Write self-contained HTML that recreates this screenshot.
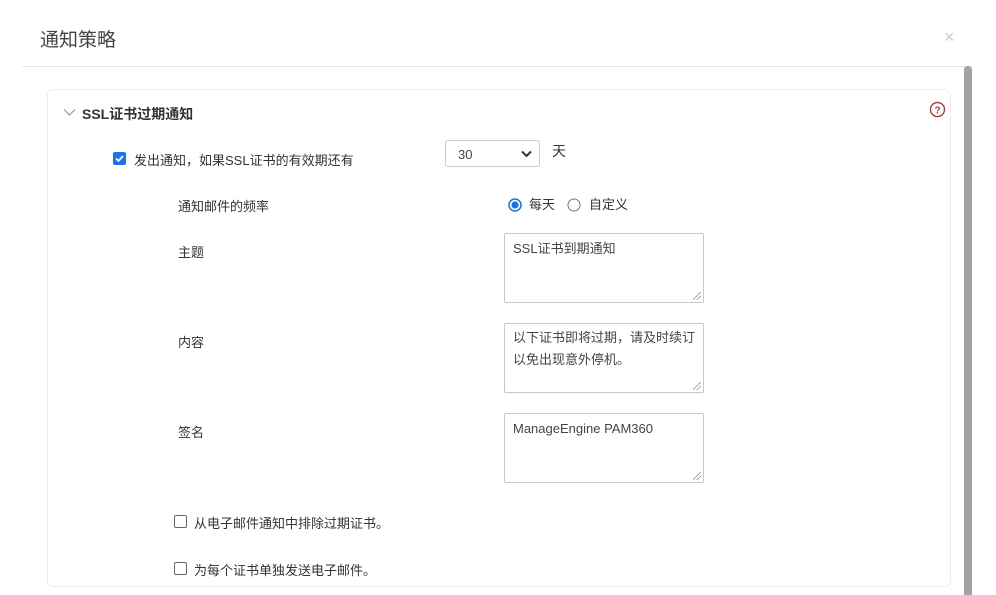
<!DOCTYPE html>
<html><head><meta charset="utf-8"><style>
*{margin:0;padding:0;box-sizing:border-box}
body{width:996px;height:595px;background:#fff;position:relative;overflow:hidden;font-family:"Liberation Sans","Noto Sans CJK SC",sans-serif;color:#333;font-size:13px}
.a{position:absolute;white-space:nowrap}
.ta{position:absolute;border:1px solid #c8c8c8;border-radius:2px;background:#fff;width:200px;height:70px;padding:4px 8px;font-size:13px;line-height:22px;color:#444;white-space:normal}
.ta:after{content:"";position:absolute;right:2px;bottom:2px;width:8px;height:8px;background:linear-gradient(135deg,transparent 45%,#888 46%,#888 52%,transparent 53%,transparent 70%,#888 71%,#888 77%,transparent 78%)}
.cb{position:absolute;width:13px;height:13px;border:1px solid #666;border-radius:2px;background:#fff}
</style></head><body>
<div class="a" style="left:40px;top:25px;font-size:19px;color:#444">通知策略</div>
<div class="a" style="left:944px;top:27px;font-size:18px;color:#ccc">×</div>
<div class="a" style="left:22px;top:66px;width:950px;height:1px;background:#e6e6e6"></div>
<div class="a" style="left:964px;top:66px;width:8px;height:529px;background:#a3a3a3;border-radius:4px 4px 0 0"></div>
<div class="a" style="left:47px;top:89px;width:904px;height:498px;border:1px solid #ececec;border-radius:6px"></div>
<svg class="a" style="left:63px;top:108px" width="13" height="9"><path d="M1 1.5 L6.5 7 L12 1.5" stroke="#999" stroke-width="1.2" fill="none"/></svg>
<div class="a" style="left:82px;top:104px;font-size:14px;font-weight:bold;color:#333">SSL证书过期通知</div>
<svg class="a" style="left:929px;top:101px" width="17" height="17"><circle cx="8.5" cy="8.5" r="7" stroke="#b23a3a" stroke-width="1.4" fill="none"/><text x="8.5" y="12.3" font-size="10" font-weight="bold" fill="#b23a3a" text-anchor="middle" font-family="Liberation Sans">?</text></svg>
<div class="cb" style="left:113px;top:152px;background:#1a73e8;border-color:#1a73e8"><svg width="11" height="11" style="position:absolute;left:0;top:0"><path d="M2 5.5 L4.5 8 L9 3" stroke="#fff" stroke-width="1.8" fill="none"/></svg></div>
<div class="a" style="left:134px;top:150px">发出通知，如果SSL证书的有效期还有</div>
<div class="a" style="left:445px;top:140px;width:95px;height:27px;border:1px solid #ccc;border-radius:3px;padding:6px 12px;color:#444">30</div>
<svg class="a" style="left:521px;top:150px" width="11" height="8"><path d="M1 1.5 L5.5 6 L10 1.5" stroke="#333" stroke-width="2" fill="none"/></svg>
<div class="a" style="left:552px;top:141px;font-size:14px">天</div>
<div class="a" style="left:178px;top:196px">通知邮件的频率</div>
<svg class="a" style="left:508px;top:198px" width="15" height="15"><circle cx="7" cy="7" r="6" stroke="#1a73e8" stroke-width="1.5" fill="#fff"/><circle cx="7" cy="7" r="3.6" fill="#1a73e8"/></svg>
<div class="a" style="left:529px;top:194px">每天</div>
<svg class="a" style="left:567px;top:198px" width="15" height="15"><circle cx="7" cy="7" r="6" stroke="#777" stroke-width="1" fill="#fff"/></svg>
<div class="a" style="left:589px;top:194px">自定义</div>
<div class="a" style="left:178px;top:242px">主题</div>
<div class="ta" style="left:504px;top:233px">SSL证书到期通知</div>
<div class="a" style="left:178px;top:332px">内容</div>
<div class="ta" style="left:504px;top:323px;padding-top:3px">以下证书即将过期，请及时续订以免出现意外停机。</div>
<div class="a" style="left:178px;top:422px">签名</div>
<div class="ta" style="left:504px;top:413px">ManageEngine PAM360</div>
<div class="cb" style="left:174px;top:515px"></div>
<div class="a" style="left:194px;top:513px">从电子邮件通知中排除过期证书。</div>
<div class="cb" style="left:174px;top:562px"></div>
<div class="a" style="left:194px;top:560px">为每个证书单独发送电子邮件。</div>
</body></html>
